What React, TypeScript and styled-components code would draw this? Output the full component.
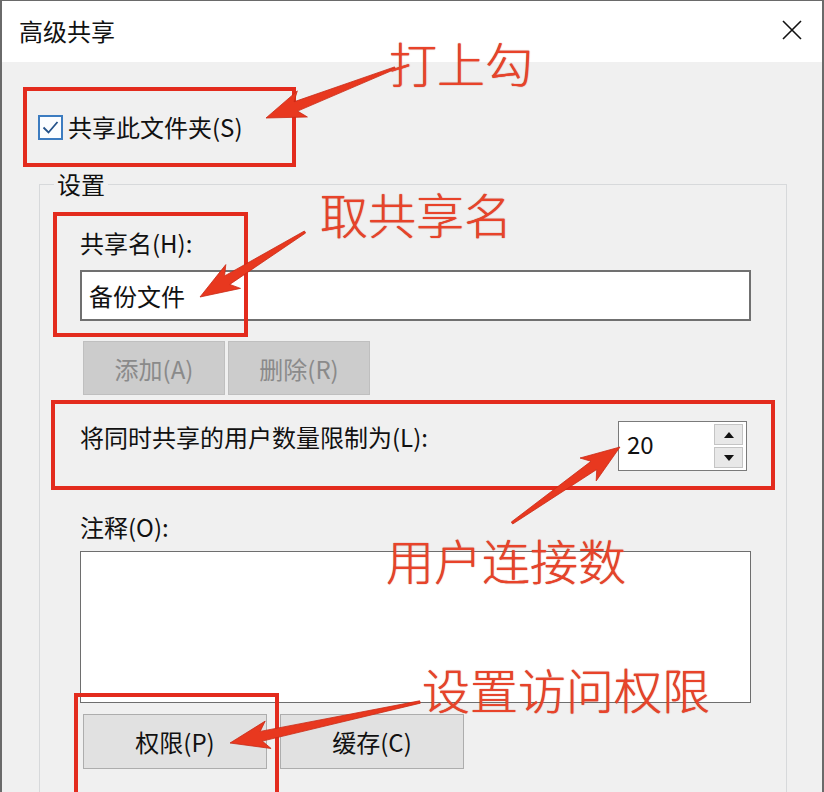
import React from 'react';
import styled, { createGlobalStyle } from 'styled-components';

const GlobalStyle = createGlobalStyle`
  html, body {
    margin: 0;
    padding: 0;
    background: #ffffff;
  }
  body {
    font-family: "Noto Sans CJK SC", "Noto Sans", sans-serif;
    color: #111;
  }
`;

const Page = styled.div`
  position: relative;
  width: 824px;
  height: 792px;
  overflow: hidden;
`;

const Window = styled.div`
  box-sizing: border-box;
  width: 824px;
  height: 792px;
  border: 2px solid #6a6a6a;
  border-top-width: 1px;
  border-bottom: none;
  display: flex;
  flex-direction: column;
  background: #f0f0f0;
`;

const TitleBar = styled.div`
  height: 61px;
  flex: none;
  background: #ffffff;
  display: flex;
  align-items: center;
  justify-content: space-between;
  padding: 0 20px 0 17px;
`;

const Title = styled.div`
  font-size: 24px;
  line-height: 28px;
  margin-top: -2px;
  color: #111;
`;

const CloseButton = styled.div`
  width: 20px;
  height: 20px;
  margin-top: -4px;
  display: flex;
`;

const Body = styled.div`
  flex: 1;
  padding: 51px 0 0 36px;
  overflow: hidden;
`;

const CheckRow = styled.div`
  display: flex;
  align-items: center;
  gap: 5px;
  height: 28px;
  font-size: 24px;
  line-height: 28px;
`;

const CheckBox = styled.div`
  box-sizing: border-box;
  width: 25px;
  height: 25px;
  border: 2px solid #3c7cc0;
  background: #fbfdff;
  display: flex;
  align-items: center;
  justify-content: center;
`;

const Group = styled.fieldset`
  box-sizing: border-box;
  width: 748px;
  min-width: 0;
  margin: 29px 0 0 1px;
  padding: 0;
  border: 1px solid #d7d9db;
  border-bottom: none;
`;

const Legend = styled.legend`
  margin-left: 14px;
  padding: 0 3px;
  font-size: 24px;
  line-height: 28px;
  color: #111;
`;

const GroupContent = styled.div`
  padding: 0 35px 60px 40px;
  display: flex;
  flex-direction: column;
`;

const FieldLabel = styled.div<{ $top: number }>`
  margin-top: ${p => p.$top}px;
  font-size: 24px;
  line-height: 28px;
  color: #111;
`;

const TextField = styled.input`
  box-sizing: border-box;
  margin-top: 13px;
  width: 671px;
  height: 51px;
  border: 2px solid #707070;
  background: #ffffff;
  padding: 0 0 0 7px;
  font-family: inherit;
  font-size: 24px;
  color: #111;
  outline: none;
`;

const ButtonRow = styled.div<{ $top: number; $gap: number }>`
  display: flex;
  gap: ${p => p.$gap}px;
  margin: ${p => p.$top}px 0 0 3px;
`;

const PushButton = styled.button<{ $w: number; $h: number }>`
  box-sizing: border-box;
  width: ${p => p.$w}px;
  height: ${p => p.$h}px;
  padding: 0;
  font-family: inherit;
  font-size: 24px;
  background: #e1e1e1;
  border: 1px solid #adadad;
  color: #111;

  &:disabled {
    background: #cccccc;
    border-color: #bfbfbf;
    color: #8a8a8a;
  }
`;

const LimitRow = styled.div`
  display: flex;
  align-items: flex-start;
  justify-content: space-between;
  margin-top: 26px;
  padding-right: 4px;
`;

const LimitLabel = styled.div`
  margin-top: 2px;
  font-size: 24px;
  line-height: 28px;
  color: #111;
`;

const SpinBox = styled.div`
  box-sizing: border-box;
  width: 129px;
  height: 50px;
  border: 1px solid #7a7a7a;
  background: #ffffff;
  display: flex;
  justify-content: space-between;
  padding: 2px 3px 2px 8px;
`;

const SpinValue = styled.div`
  font-size: 24px;
  line-height: 40px;
  color: #111;
`;

const SpinButtons = styled.div`
  display: flex;
  flex-direction: column;
  gap: 2px;
  width: 29px;
`;

const SpinButton = styled.div`
  box-sizing: border-box;
  flex: 1;
  background: #e8e8e8;
  border: 1px solid #c4c4c4;
  display: flex;
  align-items: center;
  justify-content: center;
`;

const CommentBox = styled.div`
  box-sizing: border-box;
  margin-top: 10px;
  width: 671px;
  height: 152px;
  border: 1px solid #6e6e6e;
  background: #ffffff;
`;

const Overlay = styled.div`
  position: absolute;
  inset: 0;
  pointer-events: none;
`;

const RedBox = styled.div<{ $x: number; $y: number; $w: number; $h: number }>`
  position: absolute;
  box-sizing: border-box;
  left: ${p => p.$x}px;
  top: ${p => p.$y}px;
  width: ${p => p.$w}px;
  height: ${p => p.$h}px;
  border: 4px solid #e32b1d;
`;

const Note = styled.div<{ $x: number; $y: number }>`
  position: absolute;
  left: ${p => p.$x}px;
  top: ${p => p.$y}px;
  font-family: "Noto Sans CJK SC", sans-serif;
  font-weight: 300;
  font-size: 48px;
  line-height: 48px;
  white-space: nowrap;
  color: #e8432a;
  text-shadow: 0 0 1px #b42a17;
`;

const ArrowLayer = styled.svg`
  position: absolute;
  left: 0;
  top: 0;
`;

type Pt = [number, number];

function arrowPoints(tail: Pt, tip: Pt): string {
  const dx = tip[0] - tail[0];
  const dy = tip[1] - tail[1];
  const len = Math.hypot(dx, dy);
  const ux = dx / len;
  const uy = dy / len;
  const nx = -uy;
  const ny = ux;
  const headLen = 32;
  const headHalf = 14;
  const bx = tip[0] - ux * headLen;
  const by = tip[1] - uy * headLen;
  const wx = bx - ux * 7;
  const wy = by - uy * 7;
  const pts: Pt[] = [
    [tail[0] + nx * 1.2, tail[1] + ny * 1.2],
    [bx + nx * 5, by + ny * 5],
    [wx + nx * headHalf, wy + ny * headHalf],
    tip,
    [wx - nx * headHalf, wy - ny * headHalf],
    [bx - nx * 5, by - ny * 5],
    [tail[0] - nx * 1.2, tail[1] - ny * 1.2],
  ];
  return pts.map(p => `${p[0].toFixed(1)},${p[1].toFixed(1)}`).join(' ');
}

const arrows: { tail: Pt; tip: Pt }[] = [
  { tail: [395, 68], tip: [266, 118] },
  { tail: [305, 232], tip: [200, 297] },
  { tail: [512, 523], tip: [620, 447] },
  { tail: [420, 702], tip: [230, 743] },
];

const notes = [
  { text: '打上勾', x: 389, y: 38 },
  { text: '取共享名', x: 320, y: 189 },
  { text: '用户连接数', x: 386, y: 535 },
  { text: '设置访问权限', x: 422, y: 664 },
];

const boxes = [
  { x: 23, y: 87, w: 273, h: 80 },
  { x: 53, y: 212, w: 195, h: 125 },
  { x: 51, y: 400, w: 724, h: 90 },
  { x: 74, y: 693, w: 205, h: 110 },
];

function App() {
  return (
    <Page>
      <GlobalStyle />
      <Window>
        <TitleBar>
          <Title>高级共享</Title>
          <CloseButton>
            <svg width="20" height="20" viewBox="0 0 20 20">
              <path d="M1 1 L19 19 M19 1 L1 19" stroke="#111" strokeWidth="1.6" fill="none" />
            </svg>
          </CloseButton>
        </TitleBar>
        <Body>
          <CheckRow>
            <CheckBox>
              <svg width="19" height="19" viewBox="0 0 19 19">
                <path d="M2.5 9.5 L7.5 14.5 L16.5 4" stroke="#24528a" strokeWidth="1.8" fill="none" />
              </svg>
            </CheckBox>
            <span>共享此文件夹(S)</span>
          </CheckRow>
          <Group>
            <Legend>设置</Legend>
            <GroupContent>
              <FieldLabel $top={31}>共享名(H):</FieldLabel>
              <TextField readOnly defaultValue="备份文件" />
              <ButtonRow $top={20} $gap={3}>
                <PushButton disabled $w={142} $h={54}>添加(A)</PushButton>
                <PushButton disabled $w={142} $h={54}>删除(R)</PushButton>
              </ButtonRow>
              <LimitRow>
                <LimitLabel>将同时共享的用户数量限制为(L):</LimitLabel>
                <SpinBox>
                  <SpinValue>20</SpinValue>
                  <SpinButtons>
                    <SpinButton>
                      <svg width="10" height="6" viewBox="0 0 10 6"><path d="M0 6 L5 0 L10 6 Z" fill="#111" /></svg>
                    </SpinButton>
                    <SpinButton>
                      <svg width="10" height="6" viewBox="0 0 10 6"><path d="M0 0 L10 0 L5 6 Z" fill="#111" /></svg>
                    </SpinButton>
                  </SpinButtons>
                </SpinBox>
              </LimitRow>
              <FieldLabel $top={42}>注释(O):</FieldLabel>
              <CommentBox />
              <ButtonRow $top={11} $gap={13}>
                <PushButton $w={184} $h={55}>权限(P)</PushButton>
                <PushButton $w={184} $h={55}>缓存(C)</PushButton>
              </ButtonRow>
            </GroupContent>
          </Group>
        </Body>
      </Window>
      <Overlay>
        {boxes.map((b, i) => (
          <RedBox key={i} $x={b.x} $y={b.y} $w={b.w} $h={b.h} />
        ))}
        <ArrowLayer width="824" height="792" viewBox="0 0 824 792">
          {arrows.map((a, i) => (
            <polygon key={i} points={arrowPoints(a.tail, a.tip)} fill="#e8381f" stroke="#c92b16" strokeWidth="0.8" />
          ))}
        </ArrowLayer>
        {notes.map(n => (
          <Note key={n.text} $x={n.x} $y={n.y}>{n.text}</Note>
        ))}
      </Overlay>
    </Page>
  );
}

export default App;
